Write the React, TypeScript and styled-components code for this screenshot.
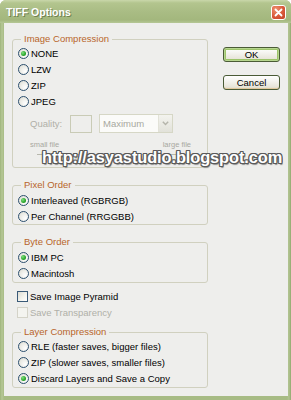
import React from "react";
import styled, { createGlobalStyle } from "styled-components";

const Global = createGlobalStyle`
  html, body { margin: 0; padding: 0; background: #ffffff; }
  body { font-family: "Liberation Sans", Arial, sans-serif; }
`;

const Window = styled.div`
  position: relative;
  width: 291px;
  height: 400px;
  box-sizing: border-box;
  display: flex;
  flex-direction: column;
  background: linear-gradient(to right, #9fb47b 0, #b6c897 2px, #a7bb84 4px, #a7bb84 calc(100% - 4px), #b2c492 calc(100% - 2px), #93a86e 100%);
  border-radius: 6px 6px 0 0;
  overflow: hidden;
`;

const TitleBar = styled.div`
  height: 23px;
  flex: none;
  display: flex;
  align-items: center;
  justify-content: space-between;
  padding: 0 5px 0 6px;
  background: linear-gradient(to bottom, #c9d7aa 0, #b3c58e 3px, #a9bc84 12px, #a3b77d 20px, #b5c796 23px);
`;

const Title = styled.span`
  font-family: "Liberation Sans", Arial, sans-serif;
  font-weight: bold;
  font-size: 10.5px;
  color: #ffffff;
  text-shadow: 1px 1px 0 #6f8150;
  margin-top: 1px;
`;

const CloseButton = styled.div`
  width: 15px;
  height: 15px;
  box-sizing: border-box;
  border: 1px solid #ffffff;
  border-radius: 3px;
  background: radial-gradient(circle at 30% 25%, #ee8f6e 0, #d9583a 55%, #c44327 100%);
  display: flex;
  align-items: center;
  justify-content: center;
  margin-top: 1px;
`;

const Client = styled.div`
  flex: 1;
  margin: 0 3px 4px 4px;
  background: #eeeeec;
  display: flex;
  align-items: flex-start;
  padding: 10px 0 0 8px;
  box-sizing: border-box;
`;

const LeftColumn = styled.div`
  width: 196px;
  display: flex;
  flex-direction: column;
`;

const RightColumn = styled.div`
  margin-left: 15px;
  margin-top: 14px;
  display: flex;
  flex-direction: column;
  gap: 13px;
`;

const Group = styled.fieldset<{ $mt?: number; $pt?: number; $pb?: number }>`
  margin: ${(p) => p.$mt ?? 0}px 0 0 0;
  padding: ${(p) => p.$pt ?? 0}px 0 ${(p) => p.$pb ?? 0}px 5px;
  border: 1px solid #d0d0bf;
  border-radius: 3px;
  min-width: 0;
  width: 196px;
  box-sizing: border-box;
`;

const Legend = styled.legend`
  margin-left: 3px;
  padding: 0 3px;
  font-size: 9.5px;
  line-height: 12px;
  color: #b8652a;
`;

const Row = styled.div<{ $disabled?: boolean; $ml?: number; $mt?: number }>`
  height: 16px;
  display: flex;
  align-items: center;
  gap: 2px;
  margin-left: ${(p) => p.$ml ?? 0}px;
  margin-top: ${(p) => p.$mt ?? 0}px;
  font-size: 9.5px;
  color: ${(p) => (p.$disabled ? "#b0b0a8" : "#000000")};
`;

const RadioCircle = styled.span<{ $checked?: boolean }>`
  width: 11px;
  height: 11px;
  box-sizing: border-box;
  border-radius: 50%;
  border: 1px solid #2c4f6e;
  background: radial-gradient(circle at 70% 70%, #ffffff 0, #e6e6df 70%, #d8d8d0 100%);
  display: flex;
  align-items: center;
  justify-content: center;
  flex: none;
  &::after {
    content: "";
    display: ${(p) => (p.$checked ? "block" : "none")};
    width: 5px;
    height: 5px;
    border-radius: 50%;
    background: radial-gradient(circle at 35% 35%, #7fe07f 0, #2aa52a 60%, #1e8a1e 100%);
  }
`;

const CheckBox = styled.span<{ $disabled?: boolean }>`
  width: 11px;
  height: 11px;
  box-sizing: border-box;
  border: 1px solid ${(p) => (p.$disabled ? "#d4d3c8" : "#3a5a78")};
  background: ${(p) =>
    p.$disabled ? "#f4f4f0" : "linear-gradient(135deg, #dcdcd4 0, #f4f4ef 60%, #ffffff 100%)"};
  flex: none;
`;

const QualityRow = styled.div`
  margin: 5px 0 0 12px;
  height: 19px;
  display: flex;
  align-items: center;
  font-size: 9.5px;
  color: #b0b0a8;
`;

const QualityLabel = styled.span`
  width: 40px;
`;

const QualityInput = styled.div`
  width: 22px;
  height: 18px;
  box-sizing: border-box;
  border: 1px solid #c9cbb6;
  background: #eeeeec;
`;

const SelectBox = styled.div`
  margin-left: 7px;
  width: 74px;
  height: 19px;
  box-sizing: border-box;
  border: 1px solid #d6d7c6;
  background: #fbfbf9;
  display: flex;
  align-items: center;
  justify-content: space-between;
  padding-left: 3px;
  font-size: 9.5px;
  color: #a8a8a0;
`;

const SelectArrow = styled.div`
  width: 14px;
  height: 17px;
  box-sizing: border-box;
  border-left: 1px solid #e2e2d8;
  background: linear-gradient(#f3f3ee, #e2e2da);
  display: flex;
  align-items: center;
  justify-content: center;
`;

const FileLabels = styled.div`
  margin-top: 6px;
  height: 10px;
  padding: 0 16px 0 12px;
  display: flex;
  justify-content: space-between;
  align-items: center;
  font-size: 7.5px;
  color: #a8a8a0;
`;

const SliderRow = styled.div`
  height: 18px;
  padding: 5px 16px 0 19px;
  box-sizing: border-box;
`;

const SliderTrack = styled.div`
  height: 1px;
  background: #b8b8ae;
`;

const Button = styled.div<{ $default?: boolean }>`
  width: 57px;
  height: 15px;
  box-sizing: border-box;
  border: 1px solid #4a5b36;
  border-radius: 3px;
  background: linear-gradient(#ffffff 0, #f4f3ee 40%, #e7e4d8 85%, #d9d2c0 100%);
  box-shadow: ${(p) => (p.$default ? "inset 0 0 0 1px #b7d68f, inset 0 0 0 2px #9cc46a" : "inset 0 -1px 0 #e1c99f")};
  display: flex;
  align-items: center;
  justify-content: center;
  font-size: 9.5px;
  color: #000000;
`;

const Watermark = styled.div`
  position: absolute;
  left: 42px;
  top: 147px;
  font-family: "Liberation Sans", Arial, sans-serif;
  font-weight: bold;
  font-size: 16.4px;
  line-height: 20px;
  color: #ffffff;
  letter-spacing: -0.1px;
  text-shadow: 1px 0 0 #5a5a5a, -1px 0 0 #5a5a5a, 0 1px 0 #5a5a5a, 0 -1px 0 #5a5a5a,
    1px 1px 0 #5a5a5a, -1px -1px 0 #5a5a5a, 1px -1px 0 #5a5a5a, -1px 1px 0 #5a5a5a,
    1px 2px 1px #8a8a8a;
  white-space: nowrap;
`;

const Radio = ({ label, checked }: { label: string; checked?: boolean }) => (
  <Row>
    <RadioCircle $checked={checked} />
    <span>{label}</span>
  </Row>
);

export default function App() {
  return (
    <>
      <Global />
      <Window>
        <TitleBar>
          <Title>TIFF Options</Title>
          <CloseButton>
            <svg width="9" height="9" viewBox="0 0 9 9">
              <path d="M1.5 1.5 L7.5 7.5 M7.5 1.5 L1.5 7.5" stroke="#ffffff" strokeWidth="1.8" strokeLinecap="round" />
            </svg>
          </CloseButton>
        </TitleBar>
        <Client>
          <LeftColumn>
            <Group>
              <Legend>Image Compression</Legend>
              <Radio label="NONE" checked />
              <Radio label="LZW" />
              <Radio label="ZIP" />
              <Radio label="JPEG" />
              <QualityRow>
                <QualityLabel>Quality:</QualityLabel>
                <QualityInput />
                <SelectBox>
                  <span>Maximum</span>
                  <SelectArrow>
                    <svg width="7" height="5" viewBox="0 0 7 5">
                      <path d="M0.8 0.8 L3.5 3.6 L6.2 0.8" stroke="#b4b4aa" strokeWidth="1.4" fill="none" />
                    </svg>
                  </SelectArrow>
                </SelectBox>
              </QualityRow>
              <FileLabels>
                <span>small file</span>
                <span>large file</span>
              </FileLabels>
              <SliderRow>
                <SliderTrack />
              </SliderRow>
            </Group>
            <Group $mt={11} $pt={1}>
              <Legend>Pixel Order</Legend>
              <Radio label="Interleaved (RGBRGB)" checked />
              <Radio label="Per Channel (RRGGBB)" />
            </Group>
            <Group $mt={11} $pt={1} $pb={1}>
              <Legend>Byte Order</Legend>
              <Radio label="IBM PC" checked />
              <Radio label="Macintosh" />
            </Group>
            <Row $ml={5} $mt={5}>
              <CheckBox />
              <span>Save Image Pyramid</span>
            </Row>
            <Row $ml={5} $disabled>
              <CheckBox $disabled />
              <span>Save Transparency</span>
            </Row>
            <Group $mt={6} $pb={1}>
              <Legend>Layer Compression</Legend>
              <Radio label="RLE (faster saves, bigger files)" />
              <Radio label="ZIP (slower saves, smaller files)" />
              <Radio label="Discard Layers and Save a Copy" checked />
            </Group>
          </LeftColumn>
          <RightColumn>
            <Button $default>OK</Button>
            <Button>Cancel</Button>
          </RightColumn>
        </Client>
        <Watermark>http://asyastudio.blogspot.com</Watermark>
      </Window>
    </>
  );
}
